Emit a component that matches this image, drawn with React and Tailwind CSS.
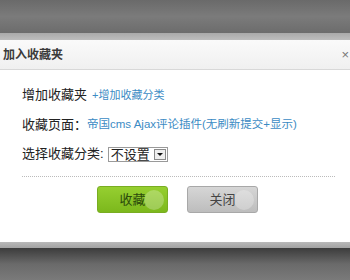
import React from "react";

export default function App() {
  return (
    <div
      className="w-[350px] h-[280px] overflow-hidden flex flex-col"
      style={{ fontFamily: '"Liberation Sans", "Noto Sans CJK SC", sans-serif' }}
    >
      <div className="h-[33px] shrink-0 bg-gradient-to-b from-[#6a6a6a] via-[#7b7b7b] to-[#6c6c6c]" />
      <div className="h-[7px] shrink-0 bg-gradient-to-b from-[#a9a9a9] to-[#bdbdbd]" />
      <div className="h-[30px] shrink-0 bg-gradient-to-b from-[#fafafa] to-[#f0f0f0] border-b border-[#d8d8d8] flex items-center justify-between pl-[3px] pr-[1px]">
        <span className="text-[12px] font-bold text-[#3a3a3a]">加入收藏夹</span>
        <span className="text-[13px] text-[#777] leading-none">×</span>
      </div>
      <div className="h-[172px] shrink-0 bg-white pl-[22px] pr-[15px] pt-[10px] flex flex-col">
        <div className="h-[30px] flex items-center">
          <span className="text-[13px] text-[#222]">增加收藏夹</span>
          <span className="text-[11px] text-[#3b8bc4] ml-[5px]">+增加收藏分类</span>
        </div>
        <div className="h-[30px] flex items-center">
          <span className="text-[13px] text-[#222]">收藏页面：</span>
          <span className="text-[11.5px] text-[#3b8bc4]">帝国cms Ajax评论插件(无刷新提交+显示)</span>
        </div>
        <div className="h-[28px] flex items-center">
          <span className="text-[13px] text-[#222]">选择收藏分类:</span>
          <div className="ml-[4px] h-[15px] w-[60px] border border-[#9a9a9a] flex items-center justify-between pl-[2px] pr-[1px]">
            <span className="text-[13px] leading-none text-[#222]">不设置</span>
            <div className="w-[12px] h-[11px] border border-[#8a8a8a] bg-[#eeeeee] flex items-center justify-center">
              <div className="w-0 h-0 border-l-[3px] border-r-[3px] border-t-[3px] border-l-transparent border-r-transparent border-t-[#111]" />
            </div>
          </div>
        </div>
        <div className="mt-[8px] border-t border-dotted border-[#bbbbbb]" />
        <div className="mt-[9px] flex justify-center gap-[19px] pr-[2px]">
          <div className="relative overflow-hidden w-[71px] h-[27px] rounded-[3px] border border-[#79ad22] bg-gradient-to-b from-[#96cf30] to-[#7cb81c] flex items-center justify-center">
            <div className="absolute left-[46px] top-[3px] w-[20px] h-[20px] rounded-full bg-white/25" />
            <span className="relative text-[13px] text-[#2c4a0c]">收藏</span>
          </div>
          <div className="relative overflow-hidden w-[71px] h-[27px] rounded-[3px] border border-[#a8a8a8] bg-gradient-to-b from-[#d6d6d6] to-[#bdbdbd] flex items-center justify-center">
            <div className="absolute left-[46px] top-[3px] w-[20px] h-[20px] rounded-full bg-white/25" />
            <span className="relative text-[13px] text-[#444]">关闭</span>
          </div>
        </div>
      </div>
      <div className="h-[6px] shrink-0 bg-gradient-to-b from-[#b9b9b9] to-[#a2a2a2]" />
      <div className="flex-1 bg-gradient-to-b from-[#3c3c3c] via-[#6a6a6a] to-[#7a7a7a]" />
    </div>
  );
}
